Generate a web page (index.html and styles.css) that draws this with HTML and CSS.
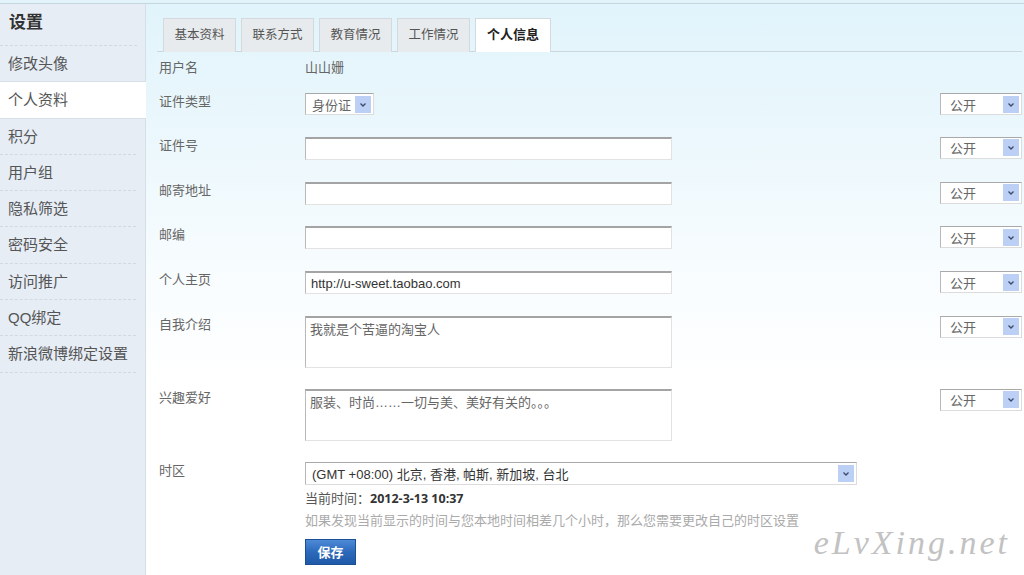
FILE: index.html
```html
<!DOCTYPE html>
<html lang="zh-CN">
<head>
    <meta charset="UTF-8">
    <meta name="viewport" content="width=device-width, initial-scale=1.0">
    <title>设置 - 个人信息</title>

    <link rel="stylesheet" href="styles.css">
</head>

<body>
    <div class="page">
        <div class="side">
            <h3>设置</h3>
            <ul>
                <li><a href="javascript:;">修改头像</a></li>
                <li class="active"><a href="javascript:;">个人资料</a></li>
                <li><a href="javascript:;">积分</a></li>
                <li><a href="javascript:;">用户组</a></li>
                <li><a href="javascript:;">隐私筛选</a></li>
                <li><a href="javascript:;">密码安全</a></li>
                <li><a href="javascript:;">访问推广</a></li>
                <li><a href="javascript:;">QQ绑定</a></li>
                <li><a href="javascript:;">新浪微博绑定设置</a></li>
            </ul>
        </div>

        <div class="main">
            <ul class="tab-nav">
                <li><a href="javascript:;">基本资料</a></li>
                <li><a href="javascript:;">联系方式</a></li>
                <li><a href="javascript:;">教育情况</a></li>
                <li><a href="javascript:;">工作情况</a></li>
                <li><a class="active" href="javascript:;">个人信息</a></li>
            </ul>

            <div class="form">
                <div class="row row-name">
                    <label>用户名</label>
                    <span class="value">山山姗</span>
                </div>

                <div class="row">
                    <label>证件类型</label>
                    <div class="select select-id"><span>身份证</span><i class="arrow"></i></div>
                    <div class="select privacy"><span>公开</span><i class="arrow"></i></div>
                </div>

                <div class="row">
                    <label>证件号</label>
                    <input class="text" type="text" value="">
                    <div class="select privacy"><span>公开</span><i class="arrow"></i></div>
                </div>

                <div class="row">
                    <label>邮寄地址</label>
                    <input class="text" type="text" value="">
                    <div class="select privacy"><span>公开</span><i class="arrow"></i></div>
                </div>

                <div class="row">
                    <label>邮编</label>
                    <input class="text" type="text" value="">
                    <div class="select privacy"><span>公开</span><i class="arrow"></i></div>
                </div>

                <div class="row">
                    <label>个人主页</label>
                    <input class="text url" type="text" value="http://u-sweet.taobao.com">
                    <div class="select privacy"><span>公开</span><i class="arrow"></i></div>
                </div>

                <div class="row row-area">
                    <label>自我介绍</label>
                    <textarea class="area">我就是个苦逼的淘宝人</textarea>
                    <div class="select privacy"><span>公开</span><i class="arrow"></i></div>
                </div>

                <div class="row row-area">
                    <label>兴趣爱好</label>
                    <textarea class="area">服装、时尚……一切与美、美好有关的。。。</textarea>
                    <div class="select privacy"><span>公开</span><i class="arrow"></i></div>
                </div>

                <div class="row row-zone">
                    <label>时区</label>
                    <div class="zone">
                        <div class="select select-zone"><span>(GMT +08:00) 北京, 香港, 帕斯, 新加坡, 台北</span><i class="arrow"></i></div>
                        <p class="now">当前时间：<b>2012-3-13 10:37</b></p>
                        <p class="tip">如果发现当前显示的时间与您本地时间相差几个小时，那么您需要更改自己的时区设置</p>
                        <button class="btn" type="button">保存</button>
                    </div>
                </div>
            </div>

            <div class="mark">eLvXing.net</div>
        </div>
    </div>
</body>
</html>
```

FILE: styles.css
```css
* {
  margin: 0;
  padding: 0;
  box-sizing: border-box;
}

html,
body {
  width: 1024px;
  height: 575px;
  overflow: hidden;
}

body {
  background: #e3f3fa;
  font-family: "Liberation Sans", "Noto Sans CJK SC", sans-serif;
  font-size: 13px;
  color: #666;
  padding-top: 3px;
}

ul {
  list-style: none;
}

a {
  text-decoration: none;
}

.page {
  display: flex;
  height: 572px;
  border-top: 1px solid #c4d7e0;
}

/* 左侧菜单 */
.side {
  width: 146px;
  flex-shrink: 0;
  background: #e6edf5;
  border-right: 1px solid #d6dee6;
}

.side h3 {
  height: 42px;
  line-height: 38px;
  padding-left: 9px;
  font-size: 17px;
  color: #333;
  margin: 0 8px 0 0;
  border-bottom: 1px dashed #d3d9e0;
}

.side li {
  height: 36.3px;
  line-height: 35.3px;
  padding-left: 8px;
  font-size: 15px;
  border-bottom: 1px dashed #d3d9e0;
  margin-right: 9px;
}

.side li a {
  color: #555;
}

.side li.active {
  background: #fff;
  margin-right: -1px;
  margin-top: -1px;
  height: 37.3px;
  border-top: 1px solid #d6dee6;
  border-bottom: 1px solid #d6dee6;
}

/* 右侧内容 */
.main {
  flex: 1;
  position: relative;
  padding: 0 2px 0 11px;
  background: linear-gradient(180deg, #e1f4fb 0, #eaf7fc 120px, #f7fcfe 260px, #fff 380px);
}

.tab-nav {
  display: flex;
  margin-top: 14px;
  padding-left: 6px;
  height: 34px;
  border-bottom: 1px solid #ccd6dc;
}

.tab-nav li {
  margin-right: 5px;
}

.tab-nav li a {
  display: block;
  height: 34px;
  line-height: 32px;
  padding: 0 10.5px;
  font-size: 12.5px;
  color: #555;
  background: #e8ebed;
  border: 1px solid #d3d9dd;
  border-bottom: none;
}

.tab-nav li a.active {
  background: #fff;
  color: #222;
  font-weight: bold;
  font-size: 13px;
  padding: 0 11px;
}

.form {
  padding-left: 2px;
}

.row {
  display: flex;
  align-items: flex-start;
  margin-bottom: 21.8px;
}

.row-area {
  margin-bottom: 21px;
}

.row label {
  width: 146px;
  flex-shrink: 0;
  line-height: 16px;
  padding-top: 1px;
}

.row-name {
  margin-top: 7px;
  margin-bottom: 16px;
}

.row-name label {
  line-height: 18px;
  padding-top: 0;
}

.row-name .value {
  line-height: 18px;
  color: #666;
}

.text,
.area {
  width: 367px;
  height: 23px;
  background: #fff;
  border: 1px solid #e2e2e2;
  border-top: 2px solid #a4a4a4;
  border-left: 1px solid #b9b9b9;
  font-family: "Liberation Sans", "Noto Sans CJK SC", sans-serif;
  font-size: 13px;
  color: #333;
  padding: 0 5px;
  outline: none;
}

.area {
  height: 52px;
  padding: 3px 4px;
  resize: none;
  color: #666;
  line-height: 18px;
}

.select {
  display: flex;
  align-items: center;
  height: 23px;
  background: #fff;
  border: 1px solid #dcdcdc;
  border-top-color: #a9a9a9;
  border-left-color: #b8b8b8;
  padding: 0 2px 0 6px;
  color: #666;
}

.select span {
  flex: 1;
  white-space: nowrap;
}

.select .arrow {
  display: block;
  width: 16px;
  height: 17px;
  background: #bccff4 url("data:image/svg+xml,%3Csvg xmlns='http://www.w3.org/2000/svg' width='16' height='17'%3E%3Cpath d='M5.5 7.5l2.5 2.5 2.5-2.5' fill='none' stroke='%233c4a6a' stroke-width='1.3'/%3E%3C/svg%3E") no-repeat center;
}

.select-id {
  width: 69px;
  height: 22px;
}

.privacy {
  width: 82px;
  height: 22px;
  margin-left: auto;
  padding-left: 9px;
}

.select-zone {
  width: 552px;
  color: #333;
}

.zone .now {
  margin-top: 5px;
  line-height: 18px;
  color: #555;
}

.zone .now b {
  color: #333;
  font-weight: bold;
  font-family: "Open Sans", "Liberation Sans", sans-serif;
  font-size: 12.5px;
}

.zone .tip {
  margin-top: 4px;
  line-height: 18px;
  color: #aaa;
}

.btn {
  margin-top: 9px;
  width: 51px;
  height: 26px;
  border: 1px solid #1d4f96;
  background: linear-gradient(180deg, #4d8ad6 0, #2d69bb 50%, #1f59a8 100%);
  color: #fff;
  font-family: "Noto Sans CJK SC", sans-serif;
  font-weight: bold;
  font-size: 13px;
}

/* 水印 */
.mark {
  position: absolute;
  right: 14px;
  bottom: 13px;
  font-family: "Liberation Serif", serif;
  font-style: italic;
  font-size: 34px;
  color: #c2c2c2;
  letter-spacing: 3px;
}
```
